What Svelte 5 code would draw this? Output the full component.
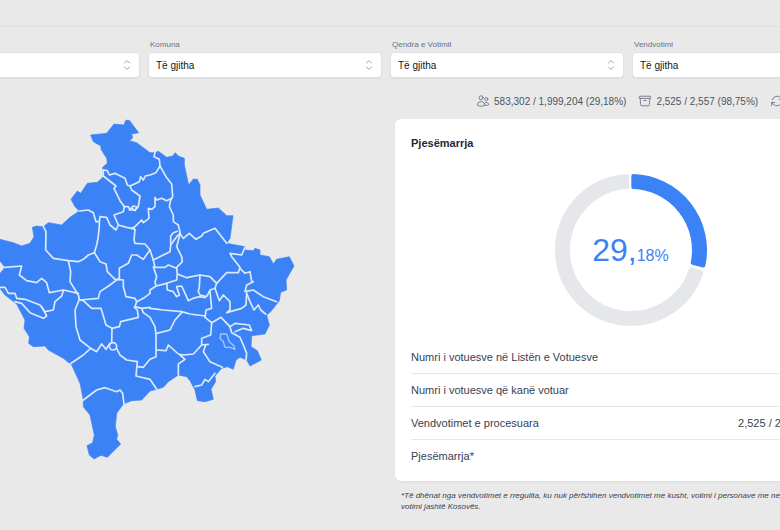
<script lang="ts">
  const filters = [
    { id: "rajoni", label: "Rajoni" },
    { id: "komuna", label: "Komuna" },
    { id: "qendra", label: "Qendra e Votimit" },
    { id: "vendvotimi", label: "Vendvotimi" },
  ];

  const rows = [
    { label: "Numri i votuesve në Listën e Votuesve", value: "1,999,204" },
    { label: "Numri i votuesve që kanë votuar", value: "583,302" },
    { label: "Vendvotimet e procesuara", value: "2,525 / 2,557 (98,75%)" },
    { label: "Pjesëmarrja*", value: "29,18%" },
  ];

  const turnout = 29.18;

  const outline =
    "272 75 320 70 342 42 372 45 377 31 388 31 416 68 395 72 398 84 388 92 410 98 450 128 465 128 475 124 500 142 518 138 526 128 535 138 553 145 553 165 566 225 580 207 592 208 600 225 600 255 620 298 655 294 680 317 699 317 690 385 680 400 735 410 735 420 760 422 765 415 780 420 780 435 808 440 820 462 830 448 868 440 882 468 858 510 860 540 842 547 838 572 812 605 800 615 808 645 795 672 755 677 753 710 772 722 784 750 750 768 740 750 720 742 708 750 700 778 682 770 665 775 645 798 647 815 633 838 640 868 615 875 592 872 585 840 570 812 560 800 535 795 505 815 490 832 470 838 450 843 425 870 395 872 370 882 350 910 346 950 353 975 350 988 362 1002 322 1042 303 1036 282 1047 268 1035 261 1007 278 998 283 975 270 915 250 890 250 870 240 820 215 765 190 745 145 720 135 708 100 710 86 700 88 680 72 655 75 630 50 582 15 555 0 535 -12 520 -6 495 2 488 15 472 0 453 -30 440 -60 400 -40 385 0 388 40 398 65 408 90 400 102 380 97 352 110 348 130 350 145 338 185 345 210 322 238 303 225 290 213 268 232 243 242 250 262 220 292 217 310 200 308 172 322 160 320 145 303 118 303 108 280 95";

  const borders = [
    "310 180 322 182 328 195 345 190 355 195 375 205 382 225 390 228 418 215 422 200 430 210 436 198 450 195 468 188 480 168 478 148 462 140 465 128",
    "480 168 498 200 515 222 518 260 512 270 508 290 520 315 520 335 535 345 542 375",
    "515 265 500 272 485 265 470 270 465 262 465 290 455 298 445 295 447 325 430 338 425 330 405 350 395 355 380 352 355 345 342 315 370 305 373 290",
    "310 180 310 198 348 228 342 235 360 272 373 290",
    "390 228 395 240 420 258 415 290 405 300 390 300 385 290 373 290",
    "388 300 400 288 412 292 405 302 394 294",
    "238 303 265 300 280 308 288 335 298 335 300 320 320 322 330 345 348 360 355 345",
    "298 335 298 350 294 385 290 405 283 428",
    "130 350 138 365 137 420 160 445 205 452 235 455 250 448 265 435 283 428",
    "283 428 300 455 318 462 322 485 345 508 358 508",
    "395 355 405 358 402 390 405 400 435 402 450 420 430 448 410 435 395 435 385 460 358 475 358 508",
    "450 420 460 450 510 425 512 405 530 380 540 370",
    "512 400 512 378 520 368 532 364",
    "542 375 550 385 568 370 588 388 605 378 610 370 645 355 680 400",
    "540 372 530 410 545 440 547 455 530 472",
    "460 450 465 472 495 472 505 465 530 475",
    "460 470 470 500 465 515 468 528",
    "530 475 532 492 560 503 600 495 630 500 650 520 680 488 715 488 720 472 695 440 690 430 725 435 735 412",
    "600 495 598 530 595 545 600 555 620 560 630 540 645 535 650 520",
    "532 492 530 510 500 520 468 528 450 540 450 550",
    "500 520 502 540 520 545 530 560 538 555 530 530 545 528 565 572 580 565 598 560 615 563",
    "630 545 635 595 618 600 615 622 635 638",
    "645 535 658 572 670 555 690 575 690 600 680 608 725 595 738 585 740 550",
    "720 475 735 490 750 485 755 515 760 515 740 525 735 545 760 540 790 560 830 575",
    "740 550 750 575 762 600 775 585 782 600 797 612",
    "450 595 490 600 545 605 570 612 615 618",
    "545 608 525 630 510 660 470 670",
    "635 638 663 622 690 650 695 668 720 682 730 705 740 730 738 750",
    "690 650 705 640 748 645 755 662 730 655 705 665",
    "635 638 632 675 605 685 605 705 625 703",
    "605 705 580 732 550 735 535 732 505 705 498 722 470 720",
    "425 595 430 608 450 622 465 650 468 675 468 740 450 748 430 772 412 770",
    "540 735 555 748 535 762 535 795",
    "617 705 610 725 630 755 667 772",
    "645 790 625 815 615 808 605 825 585 830",
    "412 755 408 798 450 808 470 838",
    "250 870 290 840 315 833 350 845 360 840 368 850 372 882",
    "210 762 250 735 272 715 240 690 228 650 225 600 238 568",
    "272 715 290 725 305 702 318 718 330 700",
    "350 715 360 735 380 750 412 755",
    "335 698 336 655",
    "240 570 250 572 275 595 303 595 318 645 336 655 358 650 362 635 415 622 412 600 403 592",
    "238 568 235 555 210 515 212 485 205 452",
    "240 570 295 565 300 545 330 525 352 508 370 510 370 530 378 560 405 565 410 575",
    "450 550 430 565 410 575 405 590 425 595 450 592",
    "15 472 65 468 58 495 80 512 110 518 125 505 140 518 148 548 190 540 235 550",
    "190 542 185 558 165 575 160 600 135 605 120 585 75 568 50 565 45 550 25 550 15 532 0 532",
    "45 575 65 580 90 608 130 625 140 618 125 590",
  ];

  const lake =
    "662 672 680 672 688 695 702 708 705 718 690 712 675 712 670 695 660 685";

  function point(radius: number, degrees: number) {
    const angle = (degrees * Math.PI) / 180;
    return `${radius * Math.sin(angle)} ${-radius * Math.cos(angle)}`;
  }

  // ring segment; the round stroke adds 2 units on every side
  function segment(from: number, to: number) {
    const outer = 74;
    const inner = 63;
    const large = to - from > 180 ? 1 : 0;
    return (
      `M${point(outer, from)}A${outer} ${outer} 0 ${large} 1 ${point(outer, to)}` +
      `L${point(inner, to - 0.3)}A${inner} ${inner} 0 ${large} 0 ${point(inner, from + 0.3)}Z`
    );
  }

  const end = turnout * 3.6;
</script>

<div class="page">
  <header class="topbar"></header>

  <main>
    <form class="filters">
      {#each filters as filter}
        <div class="field">
          <label for={filter.id}>{filter.label}</label>
          <div class="select-box">
            <select id={filter.id}>
              <option>Të gjitha</option>
            </select>
            <svg class="arrows" viewBox="0 0 8 12" aria-hidden="true">
              <path d="M1.5 4 4 1.5 6.5 4M1.5 8 4 10.5 6.5 8" />
            </svg>
          </div>
        </div>
      {/each}
    </form>

    <div class="stats">
      <div class="stat">
        <svg viewBox="0 0 24 24" aria-hidden="true">
          <path
            d="M15 19.128a9.38 9.38 0 0 0 2.625.372 9.337 9.337 0 0 0 4.121-.952 4.125 4.125 0 0 0-7.533-2.493M15 19.128v-.003c0-1.113-.285-2.16-.786-3.07M15 19.128v.106A12.318 12.318 0 0 1 8.624 21c-2.331 0-4.512-.645-6.374-1.766l-.001-.109a6.375 6.375 0 0 1 11.964-3.07M12 6.375a3.375 3.375 0 1 1-6.75 0 3.375 3.375 0 0 1 6.75 0Zm8.25 2.25a2.625 2.625 0 1 1-5.25 0 2.625 2.625 0 0 1 5.25 0Z"
          />
        </svg>
        <span>583,302 / 1,999,204 (29,18%)</span>
      </div>
      <div class="stat">
        <svg viewBox="0 0 24 24" aria-hidden="true">
          <path
            d="m20.25 7.5-.625 10.632a2.25 2.25 0 0 1-2.247 2.118H6.622a2.25 2.25 0 0 1-2.247-2.118L3.75 7.5M10 11.25h4M3.375 7.5h17.25c.621 0 1.125-.504 1.125-1.125v-1.5c0-.621-.504-1.125-1.125-1.125H3.375c-.621 0-1.125.504-1.125 1.125v1.5c0 .621.504 1.125 1.125 1.125Z"
          />
        </svg>
        <span>2,525 / 2,557 (98,75%)</span>
      </div>
      <div class="stat">
        <svg viewBox="0 0 24 24" aria-hidden="true">
          <path
            d="M16.023 9.348h4.992v-.001M2.985 19.644v-4.992m0 0h4.992m-4.993 0 3.181 3.183a8.25 8.25 0 0 0 13.803-3.7M4.031 9.865a8.25 8.25 0 0 1 13.803-3.7l3.181 3.182m0-4.991v4.99"
          />
        </svg>
        <span>10/02/2025 01:41</span>
      </div>
    </div>

    <div class="content">
      <svg class="map" viewBox="-282 0 1413 1080" role="img" aria-label="Kosova">
        <polygon class="land" points={outline} />
        {#each borders as border}
          <polyline class="border" points={border} />
        {/each}
        <circle class="border" cx="339" cy="709" r="11" />
        <polygon class="border lake" points={lake} />
      </svg>

      <section>
        <div class="card">
          <h2>Pjesëmarrja</h2>
          <div class="donut">
            <svg viewBox="-77 -77 154 154" aria-hidden="true">
              <path class="rest" d={segment(end + 2.6, 357)} />
              <path class="done" d={segment(1.8, end - 3)} />
            </svg>
            <p class="percent">29,<small>18%</small></p>
          </div>
          <table>
            <tbody>
              {#each rows as row}
                <tr>
                  <th scope="row">{row.label}</th>
                  <td>{row.value}</td>
                </tr>
              {/each}
            </tbody>
          </table>
        </div>
        <p class="note">
          *Të dhënat nga vendvotimet e rregullta, ku nuk përfshihen vendvotimet
          me kusht, votimi i personave me nevoja të veçanta dhe votimi jashtë
          Kosovës.
        </p>
      </section>
    </div>
  </main>
</div>

<style>
  :global(body) {
    background: #e9e9e9;
    overflow: hidden;
  }

  .page {
    font-family: "Liberation Sans", Arial, sans-serif;
    color: #374151;
  }

  .topbar {
    height: 26px;
    border-bottom: 1px solid #dedfe0;
  }

  main {
    margin: 12px -86px 0 -94px;
  }

  .filters {
    display: grid;
    grid-template-columns: repeat(4, 1fr);
    gap: 8px;
  }

  .field label {
    display: block;
    padding-left: 2px;
    font-size: 8px;
    line-height: 12px;
    color: #6b7280;
  }

  .select-box {
    display: grid;
    align-items: center;
    margin-top: 1px;
  }

  .select-box > * {
    grid-area: 1 / 1;
  }

  select {
    appearance: none;
    width: 100%;
    height: 26px;
    padding: 0 7px;
    border: 1px solid #dfe1e4;
    border-radius: 4px;
    background: #fff;
    box-shadow: 0 1px 1px rgba(0, 0, 0, 0.05);
    color: #111827;
    font-family: inherit;
    font-size: 10px;
  }

  .arrows {
    justify-self: end;
    width: 8px;
    height: 12px;
    margin-right: 9px;
    fill: none;
    stroke: #9ca3af;
    stroke-linecap: round;
    stroke-linejoin: round;
    pointer-events: none;
  }

  .stats {
    display: flex;
    justify-content: flex-end;
    gap: 12px;
    margin-top: 16px;
  }

  .stat {
    display: flex;
    align-items: center;
    gap: 4px;
    height: 14px;
    font-size: 10px;
    color: #4b5563;
    white-space: nowrap;
  }

  .stat svg {
    width: 14px;
    height: 14px;
    fill: none;
    stroke: #6b7280;
    stroke-width: 1.5;
    stroke-linecap: round;
    stroke-linejoin: round;
  }

  .content {
    display: grid;
    grid-template-columns: 1fr 1fr;
    gap: 18px;
    align-items: start;
    margin-top: 11px;
  }

  .map {
    display: block;
    width: 100%;
    margin-top: -9px;
  }

  .land {
    fill: #3b82f6;
    stroke: #3b82f6;
    stroke-width: 2;
    stroke-linejoin: round;
  }

  .border {
    fill: none;
    stroke: #dcebfb;
    stroke-width: 5;
    stroke-linejoin: round;
    stroke-linecap: round;
  }

  .lake {
    stroke: #a3c8fb;
    stroke-width: 4;
  }

  .card {
    padding: 16px 16px 9px;
    border-radius: 6px;
    background: #fff;
    box-shadow: 0 1px 2px rgba(0, 0, 0, 0.06);
  }

  h2 {
    margin: 0;
    font-size: 11px;
    line-height: 16px;
    font-weight: 700;
    color: #1f2937;
  }

  .donut {
    display: grid;
    place-items: center;
    margin-top: 22px;
  }

  .donut > * {
    grid-area: 1 / 1;
  }

  .donut svg {
    width: 154px;
    height: 154px;
  }

  .donut path {
    stroke-width: 4;
    stroke-linejoin: round;
  }

  .done {
    fill: #3b82f6;
    stroke: #3b82f6;
  }

  .rest {
    fill: #e5e7eb;
    stroke: #e5e7eb;
  }

  .percent {
    margin: 0;
    font-size: 32px;
    color: #3b82f6;
  }

  .percent small {
    font-size: 16px;
  }

  table {
    width: 100%;
    margin-top: 14px;
    border-collapse: collapse;
    font-size: 11px;
  }

  tr + tr {
    border-top: 1px solid #e5e7eb;
  }

  th,
  td {
    height: 32px;
    padding: 0;
    font-weight: 400;
    text-align: left;
  }

  td {
    text-align: right;
  }

  .note {
    margin: 9px 0 0;
    padding: 0 6px;
    font-size: 8px;
    line-height: 11px;
    font-style: italic;
  }
</style>
